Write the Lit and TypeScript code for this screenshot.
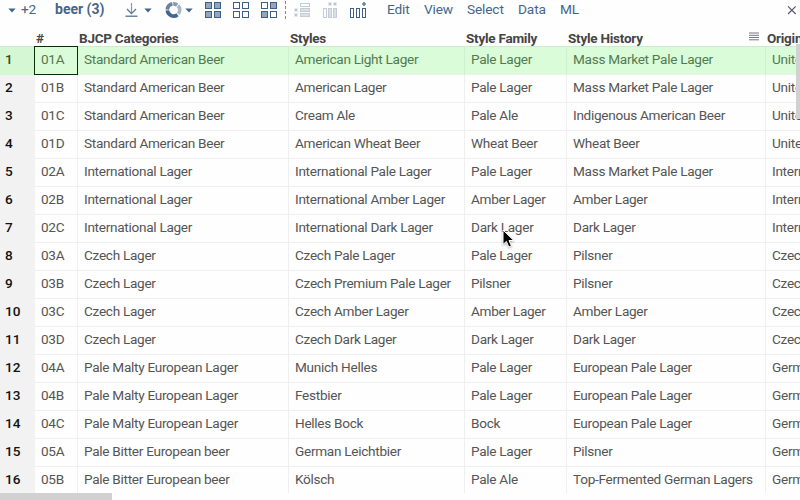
import { LitElement, html, svg, css } from "lit";
import { customElement } from "lit/decorators.js";
import { classMap } from "lit/directives/class-map.js";

const PLM = "Pale Malty European Lager";
const ROWS: string[][] = [
  ["01A", "Standard American Beer", "American Light Lager", "Pale Lager", "Mass Market Pale Lager", "United States"],
  ["01B", "Standard American Beer", "American Lager", "Pale Lager", "Mass Market Pale Lager", "United States"],
  ["01C", "Standard American Beer", "Cream Ale", "Pale Ale", "Indigenous American Beer", "United States"],
  ["01D", "Standard American Beer", "American Wheat Beer", "Wheat Beer", "Wheat Beer", "United States"],
  ["02A", "International Lager", "International Pale Lager", "Pale Lager", "Mass Market Pale Lager", "International"],
  ["02B", "International Lager", "International Amber Lager", "Amber Lager", "Amber Lager", "International"],
  ["02C", "International Lager", "International Dark Lager", "Dark Lager", "Dark Lager", "International"],
  ["03A", "Czech Lager", "Czech Pale Lager", "Pale Lager", "Pilsner", "Czech"],
  ["03B", "Czech Lager", "Czech Premium Pale Lager", "Pilsner", "Pilsner", "Czech"],
  ["03C", "Czech Lager", "Czech Amber Lager", "Amber Lager", "Amber Lager", "Czech"],
  ["03D", "Czech Lager", "Czech Dark Lager", "Dark Lager", "Dark Lager", "Czech"],
  ["04A", PLM, "Munich Helles", "Pale Lager", "European Pale Lager", "Germany"],
  ["04B", PLM, "Festbier", "Pale Lager", "European Pale Lager", "Germany"],
  ["04C", PLM, "Helles Bock", "Bock", "European Pale Lager", "Germany"],
  ["05A", "Pale Bitter European beer", "German Leichtbier", "Pale Lager", "Pilsner", "Germany"],
  ["05B", "Pale Bitter European beer", "Kölsch", "Pale Ale", "Top-Fermented German Lagers", "Germany"],
];

const HEADERS = ["#", "BJCP Categories", "Styles", "Style Family", "Style History", "Origin"];

@customElement("tool-bar")
class ToolBar extends LitElement {
  static styles = css`
    :host {
      display: grid;
      grid-template-columns: 8px 13px 34px 70px 19px 21px 20px 20px 28px 28px 24px 9px 29px 27px 37px 37px 43px 51px 42px 30px 1fr 14px;
      height: 24px;
      box-sizing: border-box;
      padding-top: 1px;
      align-items: start;
      color: #46658a;
      font: 13.7px/17px Roboto, sans-serif;
      letter-spacing: -0.15px;
      white-space: nowrap;
    }
    svg { display: block; overflow: visible; }
    .name { font-weight: 700; font-size: 14px; letter-spacing: 0; }
    .caret { margin-top: 7px; }
    .close { margin-top: 4px; }
  `;

  caret() {
    return html`<svg class="caret" width="8" height="5"><path d="M0.3 0.5H7.7L4 4.5Z" fill="#46658a" /></svg>`;
  }

  cells(filled: boolean[]) {
    return html`<svg width="17" height="18">
      ${filled.map((on, i) => svg`<rect x=${(i % 2) * 9 + 0.5} y=${Math.floor(i / 2) * 9 + 1.5} width="6" height="6"
        fill=${on ? "#94a6bc" : "#fff"} stroke="#3f5f84" />`)}
    </svg>`;
  }

  marker(x: number, y: number) {
    return svg`<rect x=${x} y=${y} width="4" height="4" fill="#e6eaef" stroke="none" />
      <rect x=${x + 1} y=${y + 1} width="2" height="2" fill="#b9c4d0" stroke="none" />`;
  }

  render() {
    return html`
      <span></span>
      ${this.caret()}
      <span>+2</span>
      <span class="name">beer (3)</span>
      <svg width="13" height="17" fill="none" stroke-width="1.2">
        <path d="M6.5 2V12" stroke="#8297b0" /><path d="M2 8L6.5 12.7L11 8" stroke="#58759a" />
        <path d="M0.5 15.2H12.5" stroke="#46658a" />
      </svg>
      ${this.caret()}
      <svg width="17" height="17" fill="none" stroke-width="3.7">
        <path d="M2.4 8.6A6.2 6.2 0 0 1 7.4 2.9" stroke="#6a83a2" />
        <path d="M8.2 2.8A6.2 6.2 0 0 1 12.2 4" stroke="#8297b0" />
        <path d="M12.9 4.6A6.2 6.2 0 0 1 13.3 12.9" stroke="#a9b7c8" />
        <path d="M2.4 9.4A6.2 6.2 0 0 0 12.5 13.7" stroke="#46658a" />
      </svg>
      ${this.caret()}
      ${this.cells([true, true, true, true])}
      ${this.cells([false, false, false, false])}
      ${this.cells([false, true, true, false])}
      <svg width="1" height="18"><path d="M0.5 0V18" stroke="#858585" stroke-dasharray="3 2" /></svg>
      <svg width="17" height="17" fill="#d9e0e6" stroke="#c3ccd7">
        <rect x="6.5" y="2.5" width="9" height="3" fill="#fff" />
        <rect x="6.5" y="7.5" width="9" height="3" /><rect x="6.5" y="12.5" width="9" height="3" />
        ${this.marker(0, 7)}${this.marker(0, 12)}
      </svg>
      <svg width="15" height="17" fill="#d9e0e6" stroke="#c3ccd7">
        <rect x="0.5" y="7.5" width="3" height="9" fill="#fff" />
        <rect x="5.5" y="7.5" width="3" height="9" /><rect x="10.5" y="7.5" width="3" height="9" />
        ${this.marker(5, 1)}${this.marker(10, 1)}
      </svg>
      <svg width="17" height="17" fill="none" stroke="#3f5f84">
        <rect x="0.5" y="7.5" width="3" height="9" /><rect x="6.5" y="7.5" width="3" height="9" />
        <rect x="12.5" y="7.5" width="3" height="9" />
        <path d="M14 1V5M12 3H16" stroke="#6a83a2" stroke-width="1.7" />
      </svg>
      <span>Edit</span><span>View</span><span>Select</span><span>Data</span><span>ML</span>
      <span></span>
      <svg class="close" width="10" height="10"><path d="M2 1.3L9.7 9M9.7 1.3L2 9" stroke="#565b70" stroke-width="1.2" /></svg>
    `;
  }
}

@customElement("data-grid")
class DataGrid extends LitElement {
  static styles = css`
    :host { display: block; overflow: hidden; height: 469px; }
    .row {
      display: grid;
      grid-template-columns: 35px 43px 211px 176px 102px 199px 120px;
      height: 28px;
      font: 13.6px/24px Roboto, sans-serif;
      letter-spacing: -0.29px;
      color: #555;
      white-space: nowrap;
    }
    .head {
      height: 22px;
      font-weight: 700;
      font-size: 13.5px;
      line-height: 29px;
      letter-spacing: -0.24px;
      color: #454545;
    }
    .head > div { padding-left: 1px; }
    .title { display: flex; justify-content: space-between; }
    .menu { margin: 8px 7px 0 0; }
    .num { background: #f2f2f2; color: #111; font-weight: 500; padding-left: 5px; letter-spacing: -0.1px; }
    .cell {
      box-sizing: border-box;
      padding-left: 6px;
      border-right: 1px solid #efefef;
      border-bottom: 1px solid #efefef;
    }
    .current { background: #dbfcd8; color: #527a52; height: 29px; box-shadow: inset 0 1px #c9eec9; line-height: 26px; }
    .current .num { background: #d6f7d3; color: #264f26; box-shadow: inset 0 1px #c9eec9; }
    .current .cell { border-right-color: #cfefcf; }
    .current .selected { border: 1px solid #063006; margin-left: -1px; line-height: 24px; }
  `;

  render() {
    return html`
      <div class="row head">
        <div></div>
        ${HEADERS.map((h, i) => html`<div class="title"><span>${h}</span>${i === 4
          ? html`<svg class="menu" width="10" height="10"><path d="M0 1H10M0 3.3H10M0 5.5H10M0 7.8H10" stroke="#747888" /></svg>` : ""}</div>`)}
      </div>
      ${ROWS.map((r, i) => html`<div class=${classMap({ row: true, current: i === 0 })}>
        <div class="num">${i + 1}</div>
        ${r.map((t, j) => html`<div class=${classMap({ cell: true, selected: i === 0 && j === 0 })}>${t}</div>`)}
      </div>`)}
    `;
  }
}

@customElement("app-root")
class AppRoot extends LitElement {
  static styles = css`
    :host { display: block; position: relative; width: 800px; height: 500px; overflow: hidden; background: #fefefe; }
    .hbar { width: 112px; height: 7px; background: #d1d1d1; }
    .vbar { position: absolute; left: 796px; top: 44px; width: 4px; height: 75px; background: #d1d1d1; }
    .pointer { position: absolute; left: 502px; top: 229px; filter: drop-shadow(0 1px 1px rgba(0, 0, 0, 0.3)); }
  `;
  render() {
    return html`
      <tool-bar></tool-bar>
      <data-grid></data-grid>
      <div class="hbar"></div>
      <div class="vbar"></div>
      <svg class="pointer" width="13" height="19">
        <path d="M1 1V15.5L4.4 12.4L6.8 18L9.4 16.9L7 11.5H11.8Z" fill="#000" stroke="#fff" />
      </svg>
    `;
  }
}
